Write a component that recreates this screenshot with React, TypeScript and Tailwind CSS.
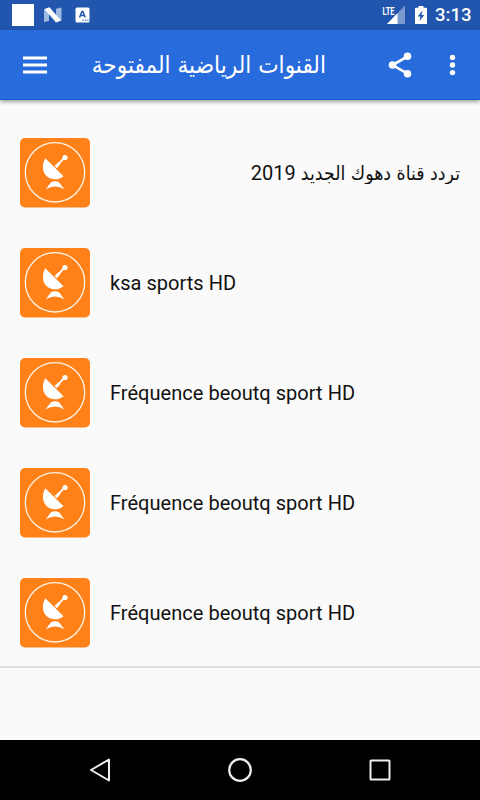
const channels = [
  { id: 1, name: 'تردد قناة دهوك الجديد', year: '2019', rtl: true },
  { id: 2, name: 'ksa sports HD' },
  { id: 3, name: 'Fréquence beoutq sport HD' },
  { id: 4, name: 'Fréquence beoutq sport HD' },
  { id: 5, name: 'Fréquence beoutq sport HD' }
];

export default function App() {
  return (
    <div className="flex h-[800px] w-[480px] flex-col overflow-hidden bg-[#fafafa] font-['Roboto','DejaVu_Sans',sans-serif]">
      <StatusBar />
      <AppBar />

      {/* Channel list */}
      <main className="flex-1">
        <ul className="h-[567.5px] border-b-2 border-[#e0e0e0] pt-[17.5px]">
          {channels.map((channel) => (
            <li key={channel.id} className="flex h-[110px] items-center gap-5 px-5">
              <DishIcon />
              {channel.rtl ? (
                <p dir="rtl" className="flex flex-1 items-baseline gap-[5px] text-xl text-[#111]">
                  <span className="origin-bottom scale-y-110 whitespace-nowrap font-['DejaVu_Sans',sans-serif] text-[17.4px] leading-5">{channel.name}</span>
                  <span>{channel.year}</span>
                </p>
              ) : (
                <p className="flex-1 text-xl tracking-[0.03px] text-[#111]">{channel.name}</p>
              )}
            </li>
          ))}
        </ul>
      </main>

      <NavigationBar />
    </div>
  );
}

function StatusBar() {
  return (
    <header className="flex h-[30px] shrink-0 items-center bg-[#2256ae] pl-3 pr-[10px] text-white">
      <div className="h-[22px] w-[22px] bg-white" />

      {/* Android N */}
      <svg className="ml-[9px]" width="20" height="16" viewBox="0 0 20 16">
        <path d="M1 2.5 6 .8V14L1 15zM13 1.8 18.5 .5v13L13 15z" fill="#9fb9e3" />
        <path d="M1.5 2 6.5.3 18 13.5 13 15.500z" fill="#fff" />
      </svg>

      {/* Keyboard */}
      <svg className="ml-[12px]" width="15" height="16" viewBox="0 0 15 16">
        <rect x=".5" y=".5" width="14" height="15" rx="1.5" fill="#fff" />
        <path d="m4.500 10.500 2.500-6h.8l2.500 6M5.500 8.500h4" fill="none" stroke="#2256ae" strokeWidth="1.500" />
        <path d="M7.500 12.500h1.200v1.200H7.500zM10 12.500h1.200v1.200H10zM12.300 12.500h1.200v1.200h-1.200z" fill="#2256ae" />
      </svg>

      {/* Signal */}
      <svg className="ml-auto" width="24" height="20" viewBox="0 0 24 20">
        <path d="M23 .5V19H5z" fill="#7a9ad0" />
        <path d="M15.500 8.200V19H5z" fill="#fff" />
        <text x="0.5" y="9.500" fill="#fff" fontSize="10" fontWeight="700" textLength="12" lengthAdjust="spacingAndGlyphs">LTE</text>
      </svg>

      {/* Battery */}
      <svg className="ml-[9px]" width="12" height="20" viewBox="0 0 12 20">
        <path d="M3.500 1h5v1.800H11c.5 0 1 .4 1 1V18c0 .6-.5 1-1 1H1c-.6 0-1-.4-1-1V3.800c0-.6.4-1 1-1h2.500z" fill="#fff" />
        <path d="M7.500 5.500 2.700 11.500h2.700l-.9 4.500 4.800-6H6.600z" fill="#2256ae" />
      </svg>

      <span className="ml-[8px] mt-px w-[35px] whitespace-nowrap text-[18.5px] font-medium leading-none">3:13</span>
    </header>
  );
}

function AppBar() {
  return (
    <nav className="z-10 flex h-[70px] shrink-0 items-center border-b border-[#1259cf] bg-[#286bdc] pl-[23px] text-white shadow-[0_2px_4px_rgba(0,0,0,0.35)]">
      <svg width="24" height="18" viewBox="0 0 24 18" fill="#fff">
        <path d="M0 .5h24v3H0zM0 7.500h24v3H0zM0 14.500h24v3H0z" />
      </svg>

      <h1 dir="rtl" className="ml-11 w-[235px] scale-y-110 whitespace-nowrap font-['DejaVu_Sans',sans-serif] text-[21.7px] leading-[30px]">
        القنوات الرياضية المفتوحة
      </h1>

      {/* Share */}
      <svg className="ml-[59px]" width="30" height="30" viewBox="0 0 30 30" fill="#fff">
        <path d="M22.500 6.500 7.500 15l15 8.700" fill="none" stroke="#fff" strokeWidth="2.600" />
        <circle cx="22.500" cy="6.300" r="3.800" />
        <circle cx="7.500" cy="15" r="3.800" />
        <circle cx="22.500" cy="23.700" r="3.800" />
      </svg>

      <svg className="ml-[34px]" width="8" height="22" viewBox="0 0 8 22" fill="#fff">
        <circle cx="3.500" cy="3.400" r="2.700" />
        <circle cx="3.500" cy="11" r="2.700" />
        <circle cx="3.500" cy="18.600" r="2.700" />
      </svg>
    </nav>
  );
}

function DishIcon() {
  return (
    <svg className="shrink-0" width="70" height="70" viewBox="0 0 70 70">
      <rect width="70" height="69.500" rx="5" fill="#ff8118" />
      <circle cx="35" cy="34.300" r="29.700" fill="none" stroke="#fff3e6" strokeWidth="1.300" />
      <path d="M25.300 20.200 43.500 38.200C38.500 42.500 31 42.300 26.500 38 22 33.500 22 25.700 25.300 20.200z" fill="#fff" />
      <path d="m36.500 28.200 7.500-8" stroke="#fff" strokeWidth="1.800" />
      <path d="m34.500 28 4.300-4 1.700 1.900-3.700 4.300z" fill="#fff" />
      <circle cx="45" cy="19.500" r="2.600" fill="#fff" />
      <path d="M25.700 51.200 31 44.200q4-2 8 0l5.300 7q-9.300-5.200-18.600 0z" fill="#fff" />
    </svg>
  );
}

function NavigationBar() {
  return (
    <footer className="flex h-[60px] shrink-0 items-center justify-between bg-black px-[85px]">
      <svg width="30" height="30" viewBox="0 0 30 30" fill="none" stroke="#eee" strokeWidth="2">
        <path d="M24 4.500v21L6 15z" strokeLinejoin="round" />
      </svg>
      <svg width="30" height="30" viewBox="0 0 30 30" fill="none" stroke="#eee" strokeWidth="2.200">
        <circle cx="15" cy="15" r="10.800" />
      </svg>
      <svg width="30" height="30" viewBox="0 0 30 30" fill="none" stroke="#eee" strokeWidth="2">
        <rect x="5.500" y="5.500" width="19" height="19" rx=".5" />
      </svg>
    </footer>
  );
}
